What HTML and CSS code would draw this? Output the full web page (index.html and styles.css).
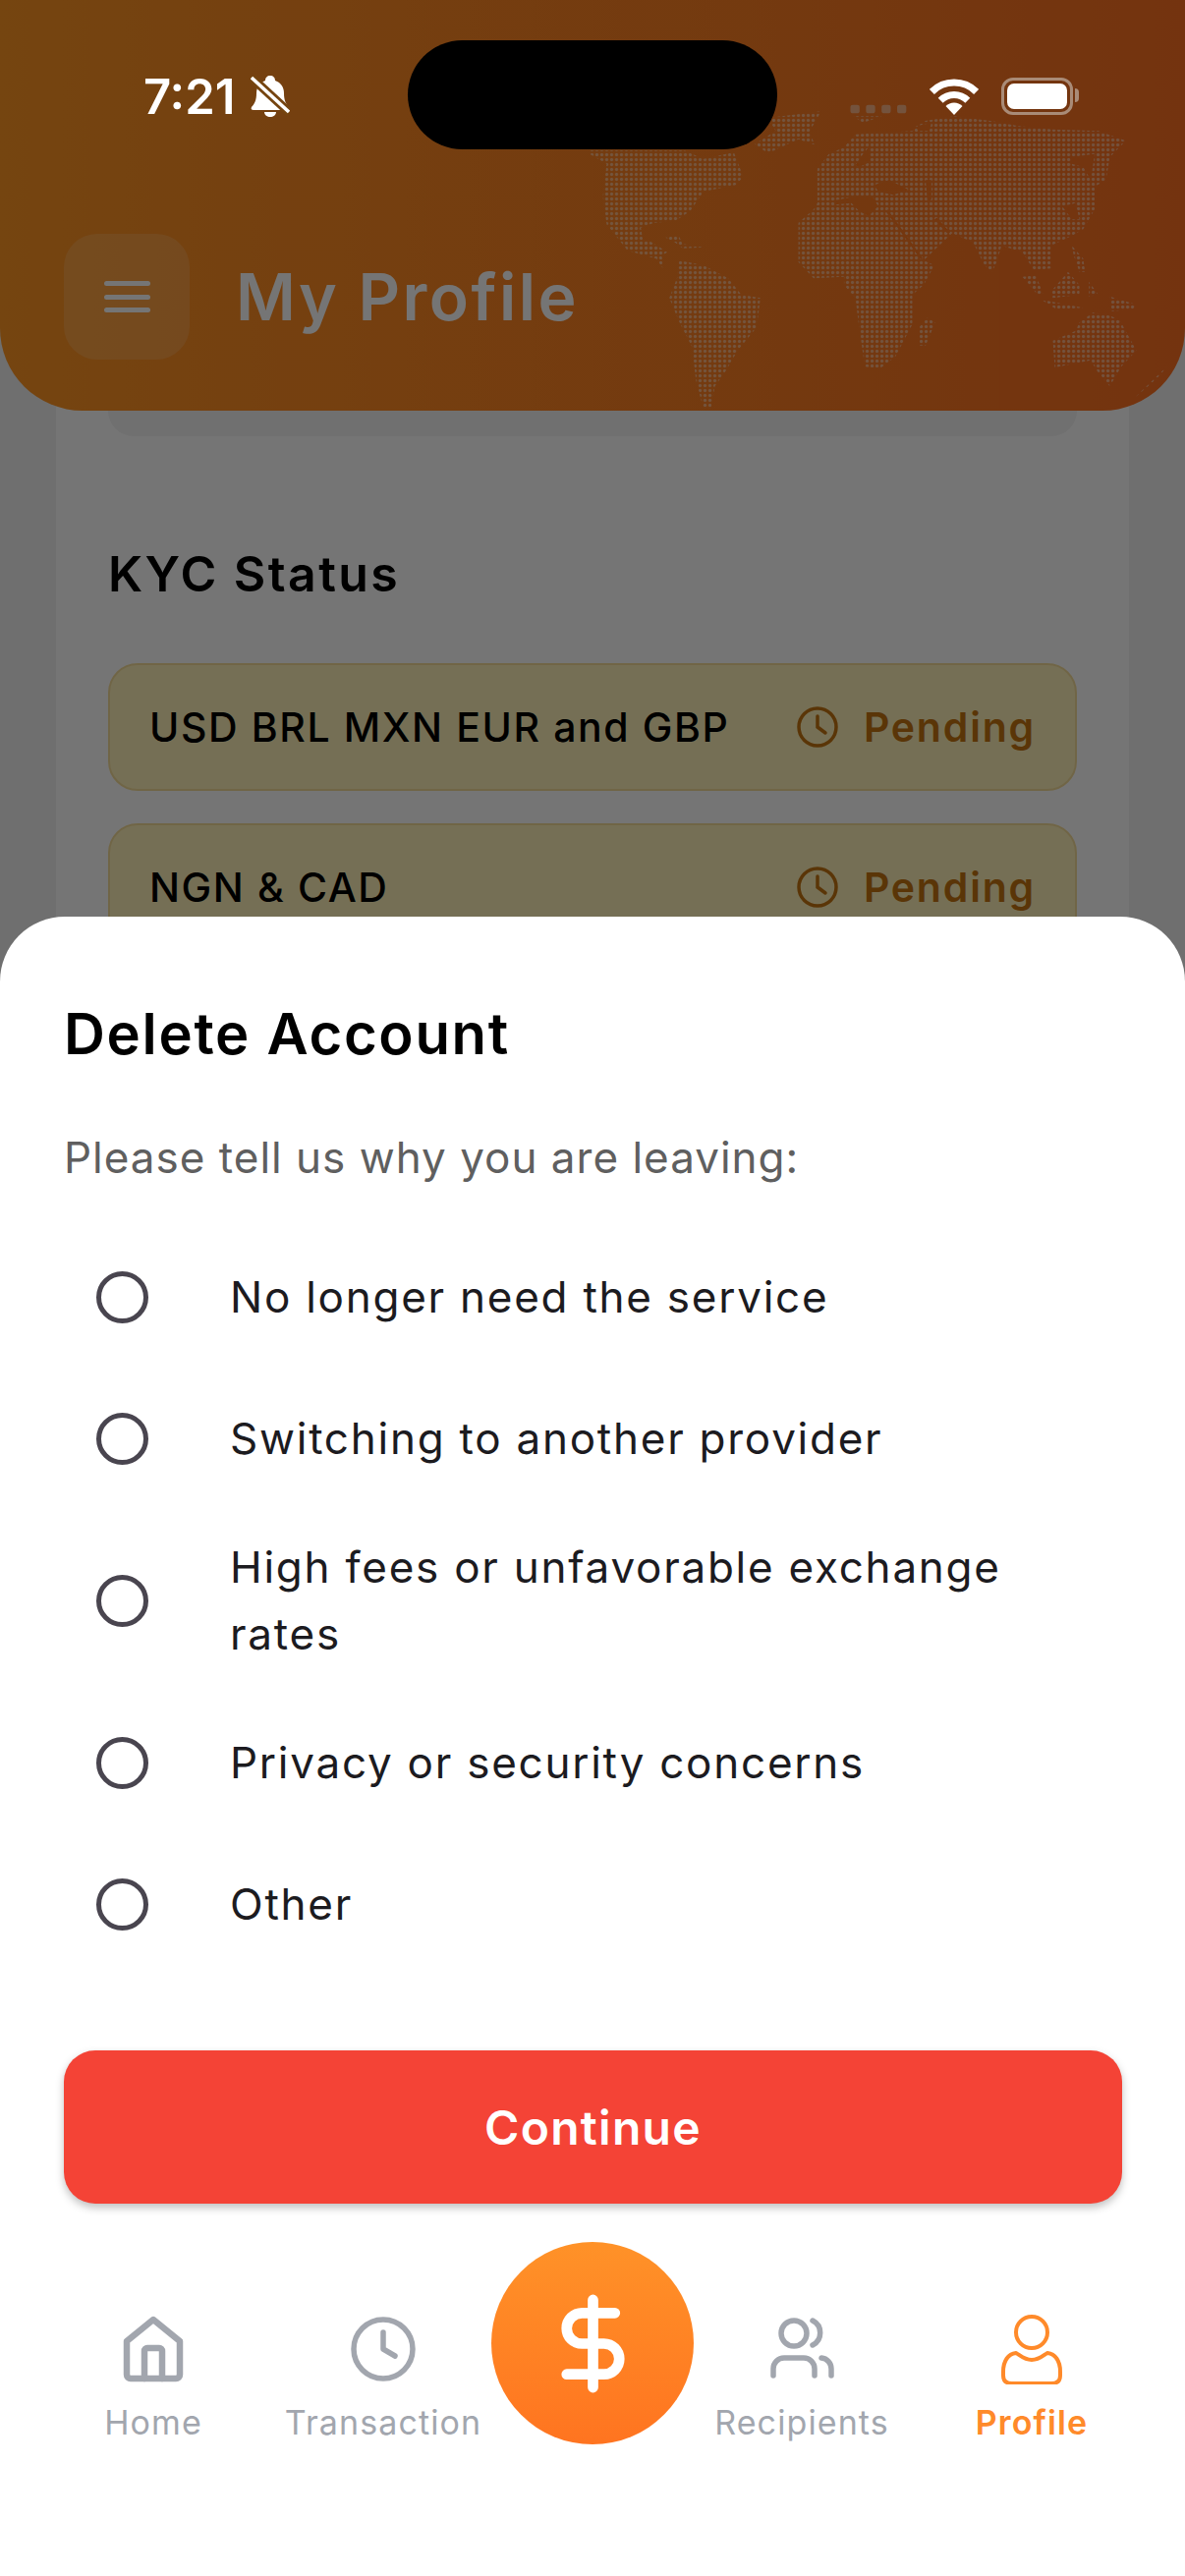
FILE: index.html
```html
<!DOCTYPE html>
<html lang="en">
<head>
  <meta charset="UTF-8">
  <meta name="viewport" content="width=device-width, initial-scale=1.0">
  <title>My Profile</title>
  <link rel="stylesheet" href="styles.css">
</head>
<body>

<div class="page">
  <header class="header">
    <!-- dotted world map, coordinates are in the viewBox -->
    <svg class="map" viewBox="0 0 1568 954" preserveAspectRatio="none">
      <defs>
        <pattern id="dots" width="12.94" height="15" patternUnits="userSpaceOnUse">
          <ellipse cx="6.47" cy="7.5" rx="4.4" ry="5" fill="#fff"/>
        </pattern>
      </defs>
      <path fill="url(#dots)" fill-rule="evenodd" d="M470 60L610 40L580 100L592 142L550 125L470 168L435 140L490 100Z
        M0 160L250 160L300 185L380 165L405 240L385 265L300 285L265 345L225 375L170 380L135 395L140 430L165 440L205 470L190 480L195 522L175 490L100 465L45 385L35 300L45 200L0 170Z
        M200 425L235 420L245 445L300 455L245 458L225 440Z
        M235 495L300 510L365 550L400 600L450 610L440 700L390 770L360 830L330 880L320 948L300 948L280 860L270 760L235 680L210 610L230 550Z
        M600 270L600 215L630 170L670 150L700 110L850 100L880 70L960 55L1060 70L1130 85L1220 95L1340 100L1412 130L1370 180L1360 250L1330 270L1330 340L1300 400L1270 420L1215 450L1215 520L1170 525L1140 470L1085 450L1072 500L1060 530L1040 510L1010 440L955 412L880 495L908 510L880 570L850 600L850 690L805 790L765 825L725 820L710 700L700 610L670 570L670 545L590 550L550 500L550 380L590 340L600 320Z
        M645 312L700 300L745 300L760 330L735 360L710 345L690 320L645 325Z
        M750 265L790 250L840 280L800 295L760 285Z
        M885 250L900 250L900 310L890 315Z
        M700 205L720 170L735 150L738 195L710 210Z
        M785 340L878 490L872 492L780 345Z
        M915 365L950 410L940 410L908 370Z
        M860 85L900 75L895 100L865 100Z
        M1265 180L1330 170L1320 250L1300 210L1270 200Z
        M1245 330L1280 320L1290 370L1270 370Z
        M1140 545L1175 540L1195 600L1180 600Z
        M1215 590L1260 530L1290 570L1290 600L1220 610Z
        M1190 615L1300 640L1230 645Z
        M1315 560L1340 600L1315 605Z
        M1270 450L1300 490L1305 530L1290 530L1275 480Z
        M1370 605L1440 630L1430 645L1375 650Z
        M1290 685L1325 655L1360 660L1395 675L1440 770L1400 820L1370 880L1335 830L1320 800L1225 822L1220 740L1280 710Z
        M890 670L910 685L885 755L868 755L868 700Z
        M1520 820L1435 915L1500 850Z
        M695 55L770 55L720 75Z"/>
      <g fill="#fff">
        <rect x="687" y="20" width="24" height="26" rx="7"/>
        <rect x="728" y="20" width="24" height="26" rx="7"/>
        <rect x="769" y="20" width="24" height="26" rx="7"/>
        <rect x="810" y="20" width="24" height="26" rx="7"/>
      </g>
    </svg>
    <button class="menu-btn"><span></span><span></span><span></span></button>
    <h1 class="title">My Profile</h1>
  </header>

  <div class="card">
    <div class="profile-stub"></div>
    <h2 class="kyc-title">KYC Status</h2>
    <div class="kyc-row">
      <span class="kyc-name">USD BRL MXN EUR and GBP</span>
      <span class="kyc-status">
        <svg class="kyc-clock" viewBox="0 0 42 42"><circle cx="21" cy="21" r="19"/><path d="M21 10V21L29 27"/></svg>
        Pending
      </span>
    </div>
    <div class="kyc-row">
      <span class="kyc-name">NGN &amp; CAD</span>
      <span class="kyc-status">
        <svg class="kyc-clock" viewBox="0 0 42 42"><circle cx="21" cy="21" r="19"/><path d="M21 10V21L29 27"/></svg>
        Pending
      </span>
    </div>
  </div>
</div>

<div class="scrim"></div>

<div class="status-bar">
  <div class="status-left">
    <span class="time">7:21</span>
    <svg class="bell" viewBox="0 0 40 42">
      <path fill="#fff" d="M20 0C23 0 25 2 25 5C31 7 34 12 34 18C34 25 36 29 39 32C40 34 39 35 37 35H3C1 35 0 34 1 32C4 29 6 25 6 18C6 12 9 7 15 5C15 2 17 0 20 0Z"/>
      <path fill="#fff" d="M14 37H26C26 40 23 42 20 42C17 42 14 40 14 37Z"/>
      <path class="bell-cut" d="M0 1L40 38"/>
      <path class="bell-line" d="M1 2L39 37"/>
    </svg>
  </div>
  <div class="status-right">
    <svg class="wifi" viewBox="0 0 50 37">
      <path d="M2.4 13.4A32 32 0 0 1 47.6 13.4M11.2 22.2A19.5 19.5 0 0 1 38.8 22.2"/>
      <path class="wifi-tip" d="M25 37L16.5 28A12 12 0 0 1 33.5 28Z"/>
    </svg>
    <div class="battery"><div class="battery-fill"></div></div>
  </div>
</div>
<div class="island"></div>

<section class="sheet">
  <h2 class="sheet-title">Delete Account</h2>
  <p class="sheet-sub">Please tell us why you are leaving:</p>
  <div class="options">
    <label class="option"><span class="radio"></span><span class="option-text">No longer need the service</span></label>
    <label class="option"><span class="radio"></span><span class="option-text">Switching to another provider</span></label>
    <label class="option"><span class="radio"></span><span class="option-text">High fees or unfavorable exchange rates</span></label>
    <label class="option"><span class="radio"></span><span class="option-text">Privacy or security concerns</span></label>
    <label class="option"><span class="radio"></span><span class="option-text">Other</span></label>
  </div>
  <button class="continue-btn">Continue</button>

  <nav class="tabs">
    <div class="tab">
      <svg class="tab-icon tab-icon-home" viewBox="0 0 72 72"><path d="M36 6L63 28V62A4 4 0 0 1 59 66H13A4 4 0 0 1 9 62V28Z"/><path d="M27 66V38A3 3 0 0 1 30 35H42A3 3 0 0 1 45 38V66"/></svg>
      <span>Home</span>
    </div>
    <div class="tab">
      <svg class="tab-icon" viewBox="0 0 72 72"><circle cx="36" cy="36" r="30"/><path d="M36 19V36L48 43"/></svg>
      <span>Transaction</span>
    </div>
    <div class="fab">
      <svg viewBox="0 0 24 24"><path d="M12 2V22M17 5H9.5A3.5 3.5 0 0 0 9.5 12H14.5A3.5 3.5 0 0 1 14.5 19H6"/></svg>
    </div>
    <div class="tab">
      <svg class="tab-icon" viewBox="0 0 72 72"><circle cx="28" cy="20" r="13"/><path d="M47 7A14 14 0 0 1 47 32"/><path d="M7 63V56A11 11 0 0 1 18 45H38A11 11 0 0 1 49 56V63"/><path d="M56 45A11 11 0 0 1 66 56V63"/></svg>
      <span>Recipients</span>
    </div>
    <div class="tab tab-active">
      <svg class="tab-icon" viewBox="0 0 72 72"><circle cx="36" cy="19" r="16"/><path d="M36 47C28 47 24 42 20 40C12 41 7 48 7 59V63C7 69 11 71 16 71H56C61 71 65 69 65 63V59C65 48 60 41 52 40C48 42 44 47 36 47Z"/></svg>
      <span>Profile</span>
    </div>
  </nav>
</section>

</body>
</html>
```

FILE: styles.css
```css
* {
  box-sizing: border-box;
}
html, body {
  margin: 0;
  padding: 0;
}
body {
  position: relative;
  width: 1206px;
  height: 2622px;
  overflow: hidden;
  font-family: Inter, "Liberation Sans", sans-serif;
  background-color: #f1f1f1;
}

/* page behind the sheet */
.header {
  position: relative;
  z-index: 1;
  display: flex;
  align-items: center;
  gap: 47px;
  height: 418px;
  padding: 238px 0 52px 65px;
  background: linear-gradient(90deg, #ff9623, #fc7022);
  border-radius: 0 0 84px 84px;
  overflow: hidden;
}
.map {
  position: absolute;
  left: 600px;
  top: 100px;
  width: 606px;
  height: 318px;
  opacity: 0.45;
}
.menu-btn {
  position: relative;
  display: flex;
  flex-direction: column;
  align-items: center;
  justify-content: center;
  gap: 8.5px;
  width: 128px;
  height: 128px;
  padding: 0;
  border: none;
  border-radius: 34px;
  background-color: rgba(255, 255, 255, 0.15);
}
.menu-btn span {
  display: block;
  width: 47px;
  height: 5px;
  border-radius: 3px;
  background-color: #fff;
}
.title {
  position: relative;
  margin: 0;
  color: #fff;
  font-size: 66px;
  font-weight: 600;
  letter-spacing: 2.5px;
}
.card {
  margin: -84px 57px 0;
  padding: 84px 53px 0;
  height: 1000px;
  background-color: #fff;
}
.profile-stub {
  height: 26px;
  border-radius: 0 0 30px 30px;
  background-color: #f4f4f4;
}
.kyc-title {
  margin: 110px 0 61px;
  color: #000;
  font-size: 50px;
  line-height: 60px;
  font-weight: 600;
  letter-spacing: 2.4px;
}
.kyc-row {
  display: flex;
  align-items: center;
  justify-content: space-between;
  height: 130px;
  margin-bottom: 33px;
  padding: 0 40px;
  border: 2px solid #f5dd9a;
  border-radius: 30px;
  background-color: #fff1b9;
}
.kyc-name {
  color: #000;
  font-size: 41px;
  font-weight: 500;
  letter-spacing: 1.6px;
}
.kyc-status {
  display: flex;
  align-items: center;
  gap: 26px;
  color: #c47511;
  font-size: 41px;
  font-weight: 600;
  letter-spacing: 1.8px;
}
.kyc-clock {
  width: 42px;
  height: 42px;
  fill: none;
  stroke: #c47511;
  stroke-width: 3.5;
  stroke-linecap: round;
}

.scrim {
  position: absolute;
  inset: 0;
  z-index: 2;
  background-color: rgba(0, 0, 0, 0.54);
}

/* phone status bar */
.status-bar {
  position: absolute;
  z-index: 3;
  top: 0;
  left: 0;
  right: 0;
  display: flex;
  align-items: center;
  justify-content: space-between;
  height: 196px;
  padding: 0 114px 0 146px;
}
.status-left, .status-right {
  display: flex;
  align-items: center;
}
.status-left {
  gap: 16px;
}
.status-right {
  gap: 23px;
}
.time {
  color: #fff;
  font-size: 49px;
  font-weight: 600;
}
.bell {
  width: 40px;
  height: 42px;
}
.bell-cut {
  stroke: #75440f;
  stroke-width: 9;
}
.bell-line {
  stroke: #fff;
  stroke-width: 3.5;
}
.wifi {
  width: 50px;
  height: 37px;
  fill: none;
  stroke: #fff;
  stroke-width: 7;
}
.wifi-tip {
  fill: #fff;
  stroke: none;
}
.battery {
  position: relative;
  width: 73px;
  height: 38px;
  padding: 3px;
  border: 3px solid #a98b77;
  border-radius: 12px;
}
.battery::after {
  content: "";
  position: absolute;
  right: -9px;
  top: 8px;
  width: 4px;
  height: 14px;
  border-radius: 0 4px 4px 0;
  background-color: #a98b77;
}
.battery-fill {
  height: 100%;
  border-radius: 7px;
  background-color: #fff;
}
.island {
  position: absolute;
  z-index: 3;
  top: 41px;
  left: 415px;
  width: 376px;
  height: 111px;
  border-radius: 56px;
  background-color: #000;
}

/* bottom sheet */
.sheet {
  position: absolute;
  z-index: 4;
  top: 933px;
  left: 0;
  right: 0;
  bottom: 0;
  padding: 85px 64px 0 65px;
  border-radius: 66px 66px 0 0;
  background-color: #fff;
}
.sheet-title {
  margin: 0;
  color: #000;
  font-size: 58px;
  line-height: 68px;
  font-weight: 600;
  letter-spacing: 1.7px;
}
.sheet-sub {
  margin: 62px 0 40px;
  color: #5f5f5f;
  font-size: 44px;
  line-height: 60px;
  letter-spacing: 1px;
}
.option {
  display: flex;
  align-items: center;
  min-height: 144px;
  padding: 25px 60px 25px 33px;
}
.radio {
  flex: none;
  width: 53px;
  height: 53px;
  margin-right: 83px;
  border: 5.5px solid #49454f;
  border-radius: 50%;
}
.option-text {
  color: #1c1b1f;
  font-size: 44px;
  line-height: 68px;
  letter-spacing: 1.75px;
}
.continue-btn {
  display: block;
  width: 100%;
  height: 156px;
  margin-top: 77px;
  border: none;
  border-radius: 32px;
  background-color: #f44336;
  color: #fff;
  font-family: inherit;
  font-size: 48px;
  font-weight: 600;
  letter-spacing: 1.3px;
  box-shadow: 0 4px 8px rgba(0, 0, 0, 0.25);
}

/* bottom nav */
.tabs {
  display: grid;
  grid-template-columns: 234px 234px 192px 234px 234px;
  align-items: start;
  margin: 39px -64px 0 -65px;
  padding-left: 39px;
}
.tab {
  display: flex;
  flex-direction: column;
  align-items: center;
  padding-top: 73px;
  color: #a2a6ae;
  font-size: 34px;
  line-height: 48px;
  letter-spacing: 1.1px;
}
.tab-icon {
  width: 72px;
  height: 72px;
  margin-bottom: 15px;
  fill: none;
  stroke: #a2a6ae;
  stroke-width: 5.5;
  stroke-linecap: round;
  stroke-linejoin: round;
}
.tab-icon-home {
  stroke-width: 6.5;
}
.tab-active {
  color: #ff8a2a;
  font-weight: 600;
}
.tab-active .tab-icon {
  stroke: #ff8a2a;
  stroke-width: 4;
}
.fab {
  display: flex;
  align-items: center;
  justify-content: center;
  justify-self: center;
  width: 206px;
  height: 206px;
  border-radius: 50%;
  background: linear-gradient(180deg, #ff9228, #ff7420);
}
.fab svg {
  width: 107px;
  height: 107px;
  fill: none;
  stroke: #fff;
  stroke-width: 2.4;
  stroke-linecap: round;
  stroke-linejoin: round;
}
```
